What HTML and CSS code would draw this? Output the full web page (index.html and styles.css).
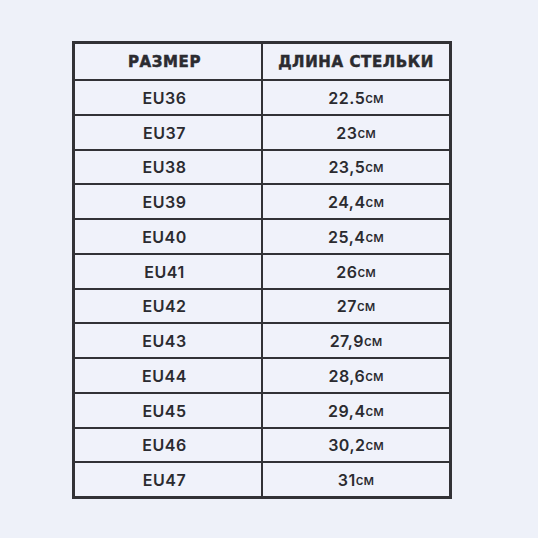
FILE: index.html
```html
<!DOCTYPE html>
<html lang="ru">
<head>
<meta charset="utf-8">
<link rel="stylesheet" href="styles.css">
</head>
<body>
<div class="table">
  <div class="cell head size">РАЗМЕР</div><div class="cell head">ДЛИНА СТЕЛЬКИ</div>
  <div class="cell size">EU36</div><div class="cell">22.5<span class="u">см</span></div>
  <div class="cell size">EU37</div><div class="cell">23<span class="u">см</span></div>
  <div class="cell size">EU38</div><div class="cell">23,5<span class="u">см</span></div>
  <div class="cell size">EU39</div><div class="cell">24,4<span class="u">см</span></div>
  <div class="cell size">EU40</div><div class="cell">25,4<span class="u">см</span></div>
  <div class="cell size">EU41</div><div class="cell">26<span class="u">см</span></div>
  <div class="cell size">EU42</div><div class="cell">27<span class="u">см</span></div>
  <div class="cell size">EU43</div><div class="cell">27,9<span class="u">см</span></div>
  <div class="cell size">EU44</div><div class="cell">28,6<span class="u">см</span></div>
  <div class="cell size">EU45</div><div class="cell">29,4<span class="u">см</span></div>
  <div class="cell size">EU46</div><div class="cell">30,2<span class="u">см</span></div>
  <div class="cell size">EU47</div><div class="cell">31<span class="u">см</span></div>
</div>
</body>
</html>
```
FILE: styles.css
```css
html, body {
  margin: 0;
  padding: 0;
  background: #eef1f9;
}
body {
  width: 538px;
  height: 538px;
  overflow: hidden;
  padding-top: 41px;
  box-sizing: border-box;
}
.table {
  margin-left: 72px;
  width: 380px;
  height: 458px;
  box-sizing: border-box;
  padding: 3px;
  background: #323236;
  display: grid;
  grid-template-columns: 186px 186px;
  grid-template-rows: 35px repeat(12, 1fr);
  gap: 2px;
}
.cell {
  background: #f0f2fa;
  display: flex;
  align-items: center;
  justify-content: center;
  font-family: Inter, "Noto Sans", sans-serif;
  font-weight: 600;
  font-size: 16px;
  letter-spacing: 0.5px;
  color: #2b2b30;
  padding-top: 1px;
  box-sizing: border-box;
}
.size {
  padding-right: 7px;
}
.head {
  font-family: "DejaVu Sans", sans-serif;
  font-weight: 700;
  font-size: 15px;
  letter-spacing: 0.6px;
  -webkit-text-stroke: 0.5px #2b2b30;
}
.u {
  font-size: 13.5px;
  font-weight: 500;
  letter-spacing: 0;
}
```
